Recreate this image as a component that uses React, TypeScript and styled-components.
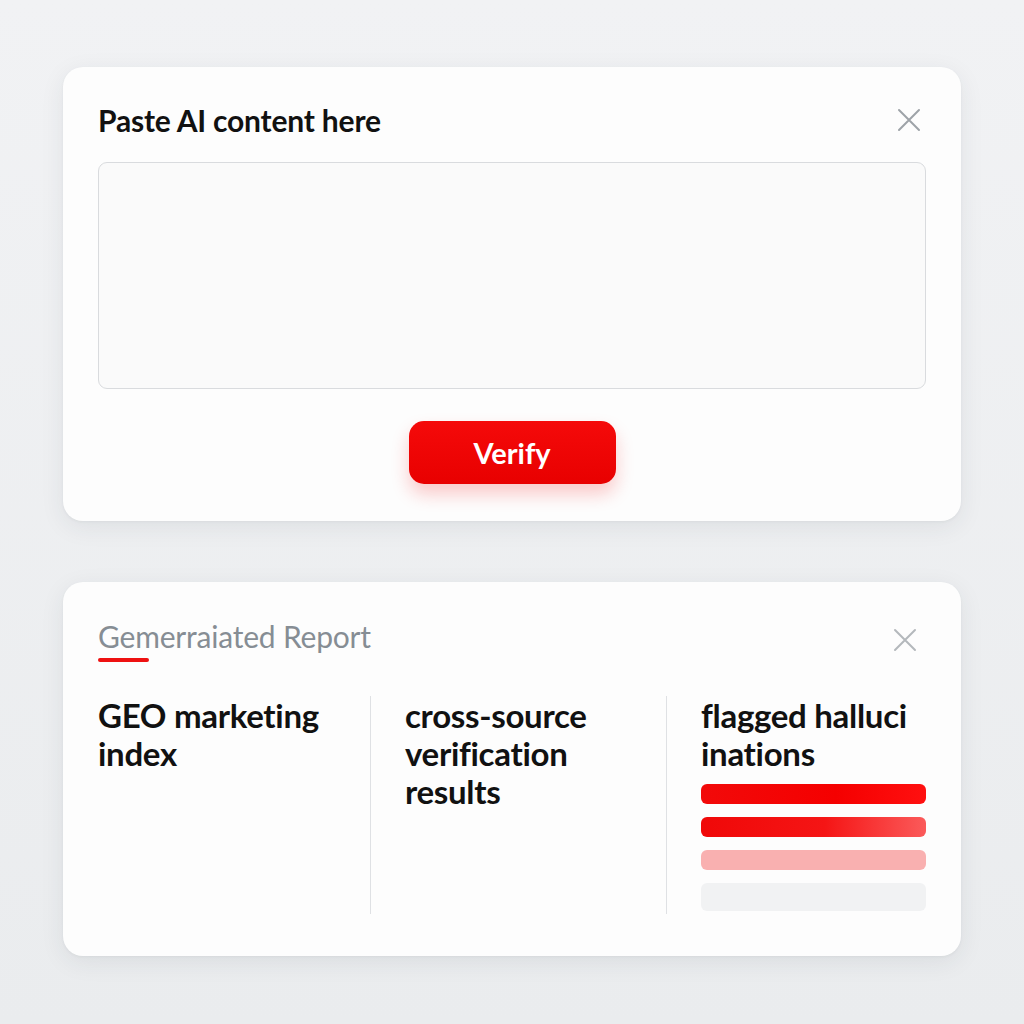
import { FC } from 'react'
import styled, { createGlobalStyle } from 'styled-components'

const GlobalStyle = createGlobalStyle`
  html, body {
    margin: 0;
    padding: 0;
    background: #eceef0;
  }
  body {
    font-family: Lato, "Noto Sans", sans-serif;
    color: #111;
  }
`

const Page = styled.div`
  min-height: 1024px;
  box-sizing: border-box;
  padding: 67px 63px 0;
  display: flex;
  flex-direction: column;
  gap: 61px;
  background: linear-gradient(180deg, #f1f2f4 0%, #eaecee 100%);
`

const Card = styled.section`
  background: #fdfdfd;
  border-radius: 20px;
  box-shadow: 0 6px 24px rgba(40, 50, 60, 0.08), 0 1px 3px rgba(40, 50, 60, 0.05);
  box-sizing: border-box;
`

const InputCard = styled(Card)`
  height: 454px;
  padding: 36px 35px 0;
  display: flex;
  flex-direction: column;
`

const ReportCard = styled(Card)`
  height: 374px;
  padding: 37px 35px 0;
  display: flex;
  flex-direction: column;
`

const Header = styled.div`
  display: flex;
  align-items: center;
  justify-content: space-between;
  height: 34px;
`

const Title = styled.h2<{ muted?: boolean }>`
  margin: 0;
  font-size: 30px;
  line-height: 34px;
  font-weight: ${(p) => (p.muted ? 400 : 700)};
  color: ${(p) => (p.muted ? '#868d94' : '#111')};
  letter-spacing: -0.2px;
`

const CloseButton = styled.button<{ shade: string; inset: number; drop?: number }>`
  border: 0;
  background: none;
  padding: 0;
  margin-right: ${(p) => p.inset}px;
  margin-top: ${(p) => (p.drop ?? 0) * 2}px;
  width: 28px;
  height: 28px;
  display: flex;
  align-items: center;
  justify-content: center;
  color: ${(p) => p.shade};
`

const TextBox = styled.textarea`
  margin-top: 25px;
  height: 227px;
  box-sizing: border-box;
  border: 1.5px solid #d9dbde;
  border-radius: 9px;
  background: #fafafa;
  resize: none;
  outline: none;
`

const VerifyButton = styled.button`
  align-self: center;
  margin-top: 32px;
  width: 207px;
  height: 63px;
  border: 0;
  border-radius: 15px;
  background: linear-gradient(180deg, #f50a0a 0%, #e80000 100%);
  color: #fff;
  font-family: Lato, "Noto Sans", sans-serif;
  font-size: 29px;
  font-weight: 700;
  box-shadow: 0 10px 18px rgba(240, 20, 20, 0.22);
`

const Underline = styled.div`
  margin-top: 5px;
  width: 51px;
  height: 4px;
  border-radius: 2px;
  background: #ee1111;
`

const Columns = styled.div`
  margin-top: 34px;
  height: 218px;
  display: grid;
  grid-template-columns: 272px 296px 1fr;
`

const Column = styled.div<{ divided?: boolean }>`
  box-sizing: border-box;
  padding-left: ${(p) => (p.divided ? '34px' : '0')};
  border-left: ${(p) => (p.divided ? '1.5px solid #dfe1e4' : 'none')};
  display: flex;
  flex-direction: column;
`

const ColumnText = styled.div`
  font-size: 33px;
  line-height: 38px;
  font-weight: 700;
  color: #111;
  letter-spacing: -0.3px;
`

const Bars = styled.div`
  margin-top: 12px;
  display: flex;
  flex-direction: column;
  gap: 13px;
`

const Bar = styled.div<{ fill: string; tall?: boolean }>`
  height: ${(p) => (p.tall ? '28px' : '20px')};
  border-radius: 6px;
  background: ${(p) => p.fill};
`

const CloseIcon: FC = () => (
  <svg width="24" height="24" viewBox="0 0 24 24" fill="none">
    <path d="M2 2L22 22M22 2L2 22" stroke="currentColor" strokeWidth="2" strokeLinecap="round" />
  </svg>
)

const App: FC = () => (
  <>
    <GlobalStyle />
    <Page>
      <InputCard>
        <Header>
          <Title>Paste AI content here</Title>
          <CloseButton shade="#9ea3a8" inset={3} aria-label="Close">
            <CloseIcon />
          </CloseButton>
        </Header>
        <TextBox aria-label="AI content" />
        <VerifyButton>Verify</VerifyButton>
      </InputCard>

      <ReportCard>
        <Header>
          <Title muted>Gemerraiated Report</Title>
          <CloseButton shade="#b4b8bc" inset={7} drop={4} aria-label="Close report">
            <CloseIcon />
          </CloseButton>
        </Header>
        <Underline />
        <Columns>
          <Column>
            <ColumnText>
              GEO marketing
              <br />
              index
            </ColumnText>
          </Column>
          <Column divided>
            <ColumnText>
              cross-source
              <br />
              verification
              <br />
              results
            </ColumnText>
          </Column>
          <Column divided>
            <ColumnText>
              flagged halluci
              <br />
              inations
            </ColumnText>
            <Bars>
              <Bar fill="linear-gradient(90deg, #f20a0a, #f50000 60%, #ff1010)" />
              <Bar fill="linear-gradient(90deg, #f00808, #f51515 55%, #fb5a5a)" />
              <Bar fill="#f9b0b0" />
              <Bar fill="#f1f2f3" tall />
            </Bars>
          </Column>
        </Columns>
      </ReportCard>
    </Page>
  </>
)

export default App
